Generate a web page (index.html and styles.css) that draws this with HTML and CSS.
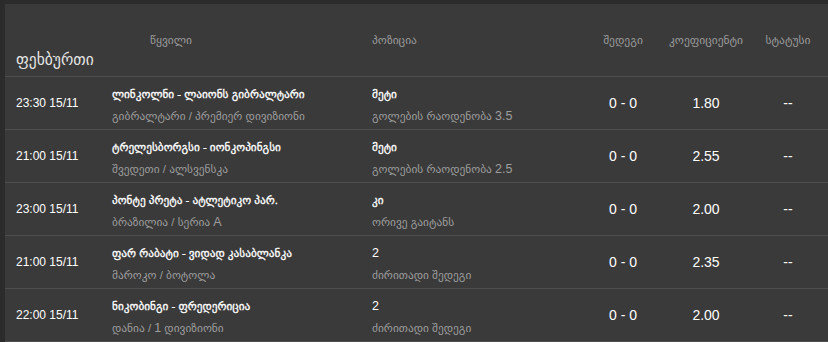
FILE: index.html
```html
<!DOCTYPE html>
<html lang="ka">
<head>
<meta charset="utf-8">
<title>ფეხბურთი</title>
<link rel="stylesheet" href="styles.css">
</head>
<body>
<div class="panel">
  <div class="row head">
    <div class="c-time sport">ფეხბურთი</div>
    <div class="c-match label">წყვილი</div>
    <div class="c-pos label">პოზიცია</div>
    <div class="c-num label">შედეგი</div>
    <div class="c-num label">კოეფიციენტი</div>
    <div class="c-num label">სტატუსი</div>
  </div>

  <div class="row">
    <div class="c-time">23:30 15/11</div>
    <div class="c-match"><div class="main">ლინკოლნი - ლაიონს გიბრალტარი</div><div class="sub">გიბრალტარი / პრემიერ დივიზიონი</div></div>
    <div class="c-pos"><div class="main">მეტი</div><div class="sub">გოლების რაოდენობა <span class="num">3.5</span></div></div>
    <div class="c-num val">0 - 0</div>
    <div class="c-num val">1.80</div>
    <div class="c-num val">--</div>
  </div>

  <div class="row">
    <div class="c-time">21:00 15/11</div>
    <div class="c-match"><div class="main">ტრელესბორგსი - იონკოპინგსი</div><div class="sub">შვედეთი / ალსვენსკა</div></div>
    <div class="c-pos"><div class="main">მეტი</div><div class="sub">გოლების რაოდენობა <span class="num">2.5</span></div></div>
    <div class="c-num val">0 - 0</div>
    <div class="c-num val">2.55</div>
    <div class="c-num val">--</div>
  </div>

  <div class="row">
    <div class="c-time">23:00 15/11</div>
    <div class="c-match"><div class="main">პონტე პრეტა - ატლეტიკო პარ.</div><div class="sub">ბრაზილია / სერია <span class="num">A</span></div></div>
    <div class="c-pos"><div class="main">კი</div><div class="sub">ორივე გაიტანს</div></div>
    <div class="c-num val">0 - 0</div>
    <div class="c-num val">2.00</div>
    <div class="c-num val">--</div>
  </div>

  <div class="row">
    <div class="c-time">21:00 15/11</div>
    <div class="c-match"><div class="main">ფარ რაბატი - ვიდად კასაბლანკა</div><div class="sub">მაროკო / ბოტოლა</div></div>
    <div class="c-pos"><div class="main"><span class="num">2</span></div><div class="sub">ძირითადი შედეგი</div></div>
    <div class="c-num val">0 - 0</div>
    <div class="c-num val">2.35</div>
    <div class="c-num val">--</div>
  </div>

  <div class="row">
    <div class="c-time">22:00 15/11</div>
    <div class="c-match"><div class="main">ნიკობინგი - ფრედერიცია</div><div class="sub">დანია / <span class="num">1</span> დივიზიონი</div></div>
    <div class="c-pos"><div class="main"><span class="num">2</span></div><div class="sub">ძირითადი შედეგი</div></div>
    <div class="c-num val">0 - 0</div>
    <div class="c-num val">2.00</div>
    <div class="c-num val">--</div>
  </div>
</div>
</body>
</html>
```
FILE: styles.css
```css
html, body {
  margin: 0;
  padding: 0;
  background: #2b2b2b;
  font-family: "Liberation Sans", "DejaVu Sans", Arial, sans-serif;
  color: #ffffff;
  overflow: hidden;
}

.panel {
  margin: 4px 0 0 5px;
  background: #3a3a3a;
  height: 338px;
}

.row {
  display: grid;
  grid-template-columns: 107px 260px 210px 82px 84px 80px;
  height: 52px;
  border-bottom: 1px solid #4e4e4e;
  align-items: center;
}

.row.head {
  height: 72px;
  align-items: center;
}

.c-time {
  padding-left: 11px;
  font-size: 12px;
  color: #ffffff;
}

.sport {
  align-self: end;
  padding-bottom: 7px;
  font-size: 15.5px;
  color: #e6e6e6;
}

.label {
  font-size: 11.5px;
  color: #9a9a9a;
  padding-bottom: 1px;
}

.c-num {
  text-align: center;
}

.c-match, .c-pos {
  align-self: start;
  padding-top: 7px;
}

.row.head .c-match,
.row.head .c-pos {
  align-self: center;
  padding-top: 0;
}

.row.head .c-match {
  padding-left: 38px;
}

.main {
  font-size: 11.3px;
  line-height: 21px;
  color: #ffffff;
  -webkit-text-stroke: 0.3px #ffffff;
}

.sub {
  font-size: 11.4px;
  line-height: 22px;
  color: #9d9d9d;
}

.num {
  font-size: 12.5px;
  -webkit-text-stroke: 0;
}

.val {
  font-size: 14px;
  color: #ffffff;
}
```
